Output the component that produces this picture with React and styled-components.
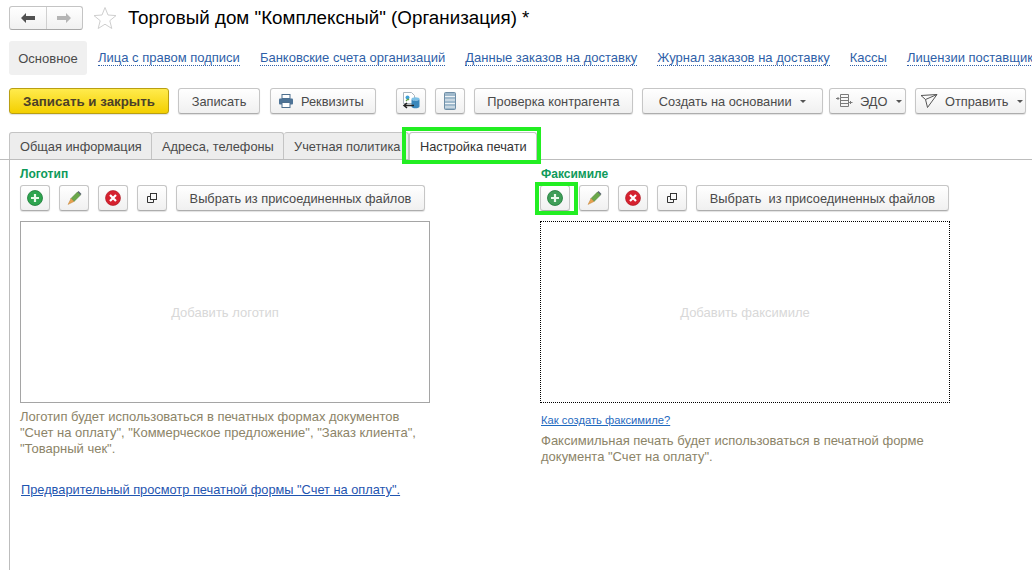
import React from 'react'
import styled, { createGlobalStyle } from 'styled-components'

const GlobalStyle = createGlobalStyle`
  html, body {
    margin: 0;
    padding: 0;
    background: #fff;
    overflow: hidden;
  }
  body {
    font-family: "Liberation Sans", Arial, sans-serif;
    font-size: 13px;
    color: #4a4a4a;
  }
`

function Printer() {
  return (
    <svg width="16" height="16" viewBox="0 0 16 16">
      <rect x="4" y="1.500" width="8" height="4" fill="#fff" stroke="#4d6f8e" />
      <rect x="1" y="5.500" width="14" height="6" rx="1" fill="#4d7396" />
      <rect x="4" y="9.500" width="8" height="5" fill="#fff" stroke="#4d6f8e" />
    </svg>
  )
}

function DocBase() {
  return (
    <svg width="20" height="20" viewBox="0 0 20 20">
      <path d="M2.500 1.500h8l3 3v8h-11z" fill="#fff" stroke="#a9b4bd" />
      <circle cx="6.500" cy="6.500" r="2" fill="#3fa0d8" />
      <path d="M5 10l2-2 1 1" fill="none" stroke="#63a846" strokeWidth="1.200" />
      <ellipse cx="14.500" cy="8" rx="4" ry="1.800" fill="#7cc0e6" />
      <path d="M10.500 8v7.500c0 1 1.800 1.800 4 1.800s4-.8 4-1.800V8c0 1-1.800 1.800-4 1.800s-4-.8-4-1.800z" fill="#3a87bb" />
      <path d="M3 14.500h10M6 12l-3 2.500L6 17" fill="none" stroke="#222" strokeWidth="1.500" />
    </svg>
  )
}

function ListStack() {
  return (
    <svg width="14" height="20" viewBox="0 0 14 20">
      <rect x="1.500" y="1.500" width="11" height="17" rx="1" fill="#9fb9cc" stroke="#6f8ea6" />
      <path d="M2 5.500h10M2 9h10M2 12.500h10M2 16h10" stroke="#eef3f6" />
    </svg>
  )
}

function EdoIcon() {
  return (
    <svg width="18" height="16" viewBox="0 0 18 16" fill="none" stroke="#7b7b7b">
      <path d="M5.500 1.500h8v3h-8zM5.500 7.500h8M5.500 10.500h8M5.500 13.500h8M5.500 4.500v9M13.500 4.500v9" />
      <path d="M1 5.500h3M2.500 4l1.500 1.500L2.500 7M17.500 9.500h-3M16 8l-1.500 1.500L16 11" />
    </svg>
  )
}

function SendIcon() {
  return (
    <svg width="18" height="16" viewBox="0 0 18 16" fill="none" stroke="#555" strokeLinejoin="round">
      <path d="M1 2.500L17 1.500 7.500 14.500 5.500 6.500zM5.500 6.500L17 1.500" />
    </svg>
  )
}

function PlusIcon({ $faded }) {
  return (
    <svg width="16" height="16" viewBox="0 0 16 16">
      <circle cx="8" cy="8" r="7.500" fill={$faded ? '#3f9e58' : '#2ea44f'} stroke="#1b7a36" strokeWidth="0.800" />
      <path d="M8 4v8M4 8h8" stroke="#eaf8ec" strokeWidth="2.200" />
    </svg>
  )
}

function PencilIcon() {
  return (
    <svg width="16" height="16" viewBox="0 0 16 16">
      <path d="M5 8.500L11.500 2l3 3L8 11.500z" fill="#6aa84a" stroke="#4d7d34" strokeWidth="0.600" />
      <path d="M11.500 2l1-1 3 3-1 1z" fill="#55606a" />
      <path d="M5 8.500l3 3-6 3z" fill="#e8a24f" stroke="#b97a30" strokeWidth="0.400" />
    </svg>
  )
}

function CrossIcon() {
  return (
    <svg width="16" height="16" viewBox="0 0 16 16">
      <circle cx="8" cy="8" r="7.500" fill="#d6212f" stroke="#a8141f" strokeWidth="0.600" />
      <path d="M5 5l6 6M11 5l-6 6" stroke="#fff" strokeWidth="2.200" />
    </svg>
  )
}

function CopyIcon() {
  return (
    <svg width="12" height="12" viewBox="0 0 12 12" fill="none" stroke="#333">
      <rect x="4.500" y="1.500" width="6" height="6" />
      <path d="M4.500 4.500h-3v6h6v-3" />
    </svg>
  )
}

function ImageToolbar({ pickLabel, pickWidth, highlight }) {
  return (
    <ToolRow>
      <Button $w={30} $mark={highlight}><PlusIcon $faded={highlight} /></Button>
      <Button $w={30}><PencilIcon /></Button>
      <Button $w={30}><CrossIcon /></Button>
      <Button $w={30}><CopyIcon /></Button>
      <Button $w={pickWidth}>{pickLabel}</Button>
    </ToolRow>
  )
}

export default function App() {
  return (
    <Page>
      <GlobalStyle />
      <Header>
        <HistoryGroup>
          <HistoryButton $divider>
            <svg width="16" height="12" viewBox="0 0 16 12"><path d="M1 6l5-5v3h9v4H6v3z" fill="#505050" /></svg>
          </HistoryButton>
          <HistoryButton>
            <svg width="16" height="12" viewBox="0 0 16 12"><path d="M15 6l-5-5v3H1v4h9v3z" fill="#b5b5b5" /></svg>
          </HistoryButton>
        </HistoryGroup>
        <svg width="24" height="24" viewBox="0 0 24 24" fill="#fff" stroke="#cfcfcf">
          <path d="M12 1.500l3 7.500 8 .6-6.200 5.100 2 7.800-6.800-4.300-6.800 4.300 2-7.800L1 9.600l8-.6z" />
        </svg>
        <Title>Торговый дом "Комплексный" (Организация) *</Title>
      </Header>

      <SectionNav>
        <SectionCurrent>Основное</SectionCurrent>
        <SectionLink>Лица с правом подписи</SectionLink>
        <SectionLink>Банковские счета организаций</SectionLink>
        <SectionLink>Данные заказов на доставку</SectionLink>
        <SectionLink>Журнал заказов на доставку</SectionLink>
        <SectionLink>Кассы</SectionLink>
        <SectionLink>Лицензии поставщиков</SectionLink>
      </SectionNav>

      <Toolbar>
        <PrimaryButton>Записать и закрыть</PrimaryButton>
        <Button $w={82} $after={10}>Записать</Button>
        <Button $w={106} $after={20} $pl={7}><Printer />Реквизиты</Button>
        <Button $w={30} $after={9}><DocBase /></Button>
        <Button $w={30} $after={9}><ListStack /></Button>
        <Button $w={159} $after={9}>Проверка контрагента</Button>
        <Button $w={181} $after={6}>Создать на основании <Caret /></Button>
        <Button $w={77} $after={9} $pl={5}><EdoIcon />ЭДО <Caret /></Button>
        <Button $w={111} $pl={4}><SendIcon />Отправить <Caret /></Button>
      </Toolbar>

      <TabBar>
        <Tab $w={143}>Общая информация</Tab>
        <Tab $w={132}>Адреса, телефоны</Tab>
        <Tab $w={125}>Учетная политика</Tab>
        <TabCurrent>Настройка печати</TabCurrent>
      </TabBar>

      <Panel>
        <Column>
          <GroupLabel>Логотип</GroupLabel>
          <ImageToolbar pickLabel="Выбрать из присоединенных файлов" pickWidth={249} />
          <ImageBox>Добавить логотип</ImageBox>
          <Hint>
            Логотип будет использоваться в печатных формах документов<br />
            "Счет на оплату", "Коммерческое предложение", "Заказ клиента",<br />
            "Товарный чек".
          </Hint>
          <PreviewLink>Предварительный просмотр печатной формы "Счет на оплату".</PreviewLink>
        </Column>
        <Column>
          <GroupLabel $shift={1}>Факсимиле</GroupLabel>
          <ImageToolbar pickLabel="Выбрать&nbsp; из присоединенных файлов" pickWidth={253} highlight />
          <ImageBox $dotted>Добавить факсимиле</ImageBox>
          <SmallLink>Как создать факсимиле?</SmallLink>
          <Hint $shift={1}>
            Факсимильная печать будет использоваться в печатной форме<br />
            документа "Счет на оплату".
          </Hint>
        </Column>
      </Panel>
    </Page>
  )
}

const Page = styled.div`
  width: 1032px;
  height: 570px;
  display: flex;
  flex-direction: column;
  padding-top: 6px;
  box-sizing: border-box;
  overflow: hidden;
`

const Header = styled.header`
  display: flex;
  align-items: center;
  height: 24px;
  padding-left: 9px;
  gap: 10px;
`

const HistoryGroup = styled.div`
  display: flex;
  width: 74px;
  height: 24px;
  box-sizing: border-box;
  border: 1px solid #c4c4c4;
  border-bottom-color: #a8a8a8;
  border-radius: 3px;
  background: linear-gradient(#fff, #f1f1f1);
`

const HistoryButton = styled.div`
  flex: 1;
  display: flex;
  align-items: center;
  justify-content: center;
  border-right: ${p => (p.$divider ? '1px solid #d0d0d0' : 'none')};
`

const Title = styled.h1`
  margin: 0 0 0 1px;
  font-size: 18.8px;
  font-weight: normal;
  color: #000;
  white-space: nowrap;
`

const SectionNav = styled.nav`
  display: flex;
  align-items: center;
  height: 34px;
  margin-top: 11px;
  padding-left: 9px;
  gap: 20px;
  white-space: nowrap;
  & > * {
    flex: none;
  }
`

const SectionCurrent = styled.div`
  width: 78px;
  height: 34px;
  margin-right: -9px;
  display: flex;
  align-items: center;
  justify-content: center;
  background: #f0f0f0;
  border-radius: 3px;
`

const SectionLink = styled.a`
  margin-top: 1px;
  color: #2f5fa8;
  border-bottom: 1px dotted #2f5fa8;
  line-height: 14px;
`

const Toolbar = styled.div`
  display: flex;
  margin-top: 13px;
  padding-left: 9px;
`

const Button = styled.div`
  position: relative;
  width: ${p => p.$w}px;
  height: 26px;
  margin-right: ${p => p.$after ?? 0}px;
  padding-left: ${p => p.$pl ?? 0}px;
  flex: none;
  box-sizing: border-box;
  display: flex;
  align-items: center;
  justify-content: ${p => (p.$pl ? 'flex-start' : 'center')};
  gap: 7px;
  border: 1px solid #c6c6c6;
  border-bottom-color: #adadad;
  border-radius: 3px;
  background: linear-gradient(#fff, #f0f0f0);
  box-shadow: 0 1px 1px rgba(0, 0, 0, 0.12);
  font-size: 12.8px;
  color: #4a4a4a;
  white-space: pre;
  &::after {
    content: '';
    display: ${p => (p.$mark ? 'block' : 'none')};
    position: absolute;
    left: -6px;
    right: -9px;
    top: -4px;
    bottom: -5px;
    border: 4px solid #22ee22;
    pointer-events: none;
  }
`

const PrimaryButton = styled(Button).attrs({ $w: 160, $after: 9 })`
  border-color: #b99f12;
  background: linear-gradient(#ffeb4d, #f3cf00);
  font-size: 13.3px;
  font-weight: bold;
  color: #4b4128;
`

const Caret = styled.span`
  width: 0;
  height: 0;
  margin-left: -2px;
  border-left: 3px solid transparent;
  border-right: 3px solid transparent;
  border-top: 3px solid #555;
`

const TabBar = styled.div`
  display: flex;
  height: 28px;
  margin-top: 18px;
  padding-left: 9px;
  box-sizing: border-box;
  border-bottom: 1px solid #bdbdbd;
`

const Tab = styled.div`
  position: relative;
  width: ${p => p.$w}px;
  height: 27px;
  padding-left: 10px;
  box-sizing: border-box;
  display: flex;
  align-items: center;
  background: #ededed;
  border: 1px solid #c4c4c4;
  border-left-width: 0;
  border-bottom: none;
  border-radius: 3px 3px 0 0;
  font-size: 12.8px;
  white-space: nowrap;
  &:first-child {
    border-left-width: 1px;
  }
`

const TabCurrent = styled(Tab)`
  width: 128px;
  height: 28px;
  background: #fff;
  border-left-width: 1px;
  color: #333;
  &::after {
    content: '';
    position: absolute;
    left: -8px;
    right: -5px;
    top: -6px;
    bottom: -4px;
    border: 4px solid #22ee22;
    pointer-events: none;
  }
`

const Panel = styled.main`
  flex: 1;
  margin-left: 9px;
  padding-left: 10px;
  border-left: 1px solid #bdbdbd;
  display: grid;
  grid-template-columns: 410px 410px;
  column-gap: 110px;
  align-content: start;
`

const Column = styled.section`
  display: flex;
  flex-direction: column;
  align-items: flex-start;
`

const GroupLabel = styled.div`
  height: 12px;
  margin-top: 8px;
  margin-left: ${p => p.$shift ?? 0}px;
  font-size: 12px;
  line-height: 12px;
  font-weight: bold;
  color: #0e9a5a;
`

const ToolRow = styled.div`
  display: flex;
  gap: 9px;
  margin-top: 5px;
`

const ImageBox = styled.div`
  width: 410px;
  height: 182px;
  margin-top: 10px;
  padding-top: 1px;
  box-sizing: border-box;
  display: flex;
  align-items: center;
  justify-content: center;
  border: ${p => (p.$dotted ? '1px dotted #000' : '1px solid #a5a5a5')};
  color: #d8d8d8;
`

const Hint = styled.p`
  margin: 6px 0 0 ${p => p.$shift ?? 0}px;
  line-height: 16px;
  color: #8c8468;
  white-space: nowrap;
`

const PreviewLink = styled.a`
  margin-top: 25px;
  margin-left: 1px;
  font-size: 12.8px;
  line-height: 15px;
  color: #1f55b0;
  text-decoration: underline;
  white-space: nowrap;
`

const SmallLink = styled.a`
  margin-top: 11px;
  margin-left: 1px;
  font-size: 11.2px;
  line-height: 13px;
  color: #1f6ac0;
  text-decoration: underline;
`
